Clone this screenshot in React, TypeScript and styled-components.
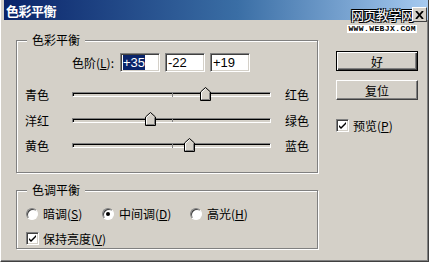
import React from 'react';
import styled, { createGlobalStyle } from 'styled-components';

const face = '#D4D0C8';
const shadow = '#808080';
const darkShadow = '#404040';

const GlobalStyle = createGlobalStyle`
  html, body {
    margin: 0;
    padding: 0;
    background: ${face};
  }
  body {
    font-family: 'Noto Sans CJK SC', 'Liberation Sans', sans-serif;
    font-size: 12px;
    color: #000;
  }
`;

const Window = styled.div`
  position: relative;
  width: 429px;
  height: 262px;
  box-sizing: border-box;
  background: ${face};
  padding: 0 3px 3px 3px;
  border-left: 1px solid #fff;
  border-right: 1px solid ${darkShadow};
  border-bottom: 1px solid ${darkShadow};
  box-shadow: inset -1px -1px 0 ${shadow};
  display: flex;
  flex-direction: column;
  overflow: hidden;
`;

const TitleBar = styled.div`
  height: 20px;
  margin-right: -3px;
  background: linear-gradient(to right, #0a246a 0%, #3a6ea5 55%, #a6caf0 100%);
  display: flex;
  align-items: center;
  padding-left: 2px;
`;

const TitleText = styled.span`
  color: #fff;
  font-weight: bold;
  font-size: 13px;
  letter-spacing: -0.5px;
`;

const Watermark = styled.div`
  position: absolute;
  top: 8px;
  right: 11px;
  display: flex;
  flex-direction: column;
  align-items: center;
`;

const WatermarkCn = styled.span`
  color: #fff;
  font-size: 13px;
  line-height: 14px;
  letter-spacing: -0.5px;
  text-shadow: 1px 1px 0 #000, -1px -1px 0 #000, 1px -1px 0 #000, -1px 1px 0 #000;
`;

const WatermarkUrl = styled.span`
  font-family: 'Liberation Mono', monospace;
  font-weight: bold;
  font-size: 8px;
  line-height: 8px;
  letter-spacing: 0.4px;
  background: #fff;
  color: #000;
  padding: 0 1px;
  margin-top: 3px;
`;

const CloseBox = styled.div`
  position: absolute;
  top: 7px;
  right: 1px;
  width: 13px;
  height: 13px;
  background: ${face};
  border: 1px solid #fff;
  border-right-color: ${darkShadow};
  border-bottom-color: ${darkShadow};
  display: flex;
  align-items: center;
  justify-content: center;
`;

const Body = styled.div`
  flex: 1;
  display: flex;
  padding: 20px 0 0 12px;
  gap: 18px;
`;

const LeftColumn = styled.div`
  width: 302px;
  display: flex;
  flex-direction: column;
  gap: 17px;
`;

const Group = styled.div<{ $h: number }>`
  position: relative;
  height: ${(p) => p.$h}px;
  box-sizing: border-box;
  border: 1px solid ${shadow};
  box-shadow: inset 1px 1px 0 #fff, 1px 1px 0 #fff;
`;

const Legend = styled.span`
  position: absolute;
  top: -8px;
  left: 10px;
  padding: 0 5px;
  background: ${face};
  line-height: 14px;
`;

const GroupInner = styled.div`
  padding: 12px 0 0 8px;
  display: flex;
  flex-direction: column;
`;

const LevelRow = styled.div`
  display: flex;
  align-items: center;
  height: 19px;
  gap: 5px;
`;

const LevelLabel = styled.span`
  width: 89px;
  text-align: right;
  padding-right: 1px;
`;

const NumBox = styled.div`
  width: 40px;
  height: 19px;
  box-sizing: border-box;
  background: #fff;
  border: 1px solid ${shadow};
  border-right-color: #fff;
  border-bottom-color: #fff;
  box-shadow: inset 1px 1px 0 ${darkShadow}, inset -1px -1px 0 ${face};
  padding: 1px 0 0 2px;
  font-family: 'Liberation Sans', sans-serif;
  font-size: 13px;
  line-height: 15px;
`;

const Selected = styled.span`
  background: #0a246a;
  color: #fff;
`;

const SliderRows = styled.div`
  margin-top: 10px;
  display: flex;
  flex-direction: column;
`;

const SliderRow = styled.div`
  display: grid;
  grid-template-columns: 47px 199px auto;
  align-items: center;
  height: 25.5px;
`;

const RightLabel = styled.span`
  margin-left: 14px;
  white-space: nowrap;
`;

const TrackWrap = styled.div`
  position: relative;
  height: 16px;
  display: flex;
  align-items: center;
`;

const Track = styled.div`
  width: 100%;
  height: 5px;
  box-sizing: border-box;
  border: 1px solid ${shadow};
  border-right-color: #fff;
  border-bottom-color: #fff;
  box-shadow: inset 1px 1px 0 #000;
  background: ${face};
`;

const Tick = styled.div`
  position: absolute;
  left: 100px;
  top: 6px;
  width: 1px;
  height: 4px;
  background: ${shadow};
`;

const Thumb = styled.svg`
  position: absolute;
  top: 0;
`;

const ToneInner = styled.div`
  padding: 14px 0 0 9px;
  display: flex;
  flex-direction: column;
  gap: 8px;
`;

const RadioRow = styled.div`
  display: flex;
  align-items: center;
`;

const RadioItem = styled.label<{ $w: number }>`
  display: flex;
  align-items: center;
  gap: 5px;
  width: ${(p) => p.$w}px;
`;

const Radio = styled.span<{ $on?: boolean }>`
  position: relative;
  width: 12px;
  height: 12px;
  box-sizing: border-box;
  border-radius: 50%;
  background: #fff;
  border: 1px solid ${shadow};
  border-right-color: #fff;
  border-bottom-color: #fff;
  box-shadow: inset 1px 1px 0 ${darkShadow};
  &::after {
    content: '';
    display: ${(p) => (p.$on ? 'block' : 'none')};
    position: absolute;
    left: 3px;
    top: 3px;
    width: 4px;
    height: 4px;
    border-radius: 50%;
    background: #000;
  }
`;

const CheckItem = styled.label`
  display: flex;
  align-items: center;
  gap: 4px;
`;

const CheckBox = styled.span`
  width: 13px;
  height: 13px;
  box-sizing: border-box;
  background: #fff;
  border: 1px solid ${shadow};
  border-right-color: #fff;
  border-bottom-color: #fff;
  box-shadow: inset 1px 1px 0 ${darkShadow}, inset -1px -1px 0 ${face};
  display: flex;
  align-items: center;
  justify-content: center;
`;

const RightColumn = styled.div`
  width: 82px;
  display: flex;
  flex-direction: column;
  padding-top: 11px;
`;

const Button = styled.div<{ $default?: boolean }>`
  height: 20px;
  box-sizing: border-box;
  background: ${face};
  border: 1px solid ${(p) => (p.$default ? '#000' : '#fff')};
  ${(p) =>
    p.$default
      ? `box-shadow: inset 1px 1px 0 #fff, inset -1px -1px 0 ${darkShadow}, inset -2px -2px 0 ${shadow};`
      : `border-right-color: ${darkShadow}; border-bottom-color: ${darkShadow}; box-shadow: inset -1px -1px 0 ${shadow};`}
  display: flex;
  align-items: center;
  justify-content: center;
  margin-bottom: 9px;
`;

const PreviewRow = styled.div`
  margin-top: 8px;
`;

const sliders = [
  { left: '青色', right: '红色', value: 35 },
  { left: '洋红', right: '绿色', value: -22 },
  { left: '黄色', right: '蓝色', value: 19 },
];

function SliderThumb({ value }: { value: number }) {
  const center = 99.5 + (value / 100) * 96;
  return (
    <Thumb width="11" height="14" viewBox="0 0 11 14" style={{ left: center - 5.5 }}>
      <polygon points="0.5,13.5 0.5,5 5.5,0.5 10.5,5 10.5,13.5" fill={face} stroke="#000" />
      <polyline points="1.5,12.5 1.5,5.4 5.5,1.8" fill="none" stroke="#fff" />
      <polyline points="9.5,5.4 9.5,12.5 1.5,12.5" fill="none" stroke={shadow} />
    </Thumb>
  );
}

function Check() {
  return (
    <svg width="9" height="9" viewBox="0 0 9 9">
      <path d="M1 4 L3 6 L8 1 L8 3 L3 8 L1 6 Z" fill="#000" />
    </svg>
  );
}

export default function App() {
  return (
    <>
      <GlobalStyle />
      <Window>
        <TitleBar>
          <TitleText>色彩平衡</TitleText>
        </TitleBar>
        <Watermark>
          <WatermarkCn>网页教学网</WatermarkCn>
          <WatermarkUrl>WWW.WEBJX.COM</WatermarkUrl>
        </Watermark>
        <CloseBox>
          <svg width="9" height="8" viewBox="0 0 9 8">
            <path d="M1 0 L8 8 M8 0 L1 8" stroke="#000" strokeWidth="1.8" />
          </svg>
        </CloseBox>
        <Body>
          <LeftColumn>
            <Group $h={133}>
              <Legend>色彩平衡</Legend>
              <GroupInner>
                <LevelRow>
                  <LevelLabel>
                    色阶(<u>L</u>):
                  </LevelLabel>
                  <NumBox>
                    <Selected>+35</Selected>
                  </NumBox>
                  <NumBox>-22</NumBox>
                  <NumBox>+19</NumBox>
                </LevelRow>
                <SliderRows>
                  {sliders.map((s) => (
                    <SliderRow key={s.left}>
                      <span>{s.left}</span>
                      <TrackWrap>
                        <Track />
                        <Tick />
                        <SliderThumb value={s.value} />
                      </TrackWrap>
                      <RightLabel>{s.right}</RightLabel>
                    </SliderRow>
                  ))}
                </SliderRows>
              </GroupInner>
            </Group>
            <Group $h={59}>
              <Legend>色调平衡</Legend>
              <ToneInner>
                <RadioRow>
                  <RadioItem $w={76}>
                    <Radio />
                    <span>
                      暗调(<u>S</u>)
                    </span>
                  </RadioItem>
                  <RadioItem $w={88}>
                    <Radio $on />
                    <span>
                      中间调(<u>D</u>)
                    </span>
                  </RadioItem>
                  <RadioItem $w={80}>
                    <Radio />
                    <span>
                      高光(<u>H</u>)
                    </span>
                  </RadioItem>
                </RadioRow>
                <CheckItem>
                  <CheckBox>
                    <Check />
                  </CheckBox>
                  <span>
                    保持亮度(<u>V</u>)
                  </span>
                </CheckItem>
              </ToneInner>
            </Group>
          </LeftColumn>
          <RightColumn>
            <Button $default>好</Button>
            <Button>复位</Button>
            <PreviewRow>
              <CheckItem>
                <CheckBox>
                  <Check />
                </CheckBox>
                <span>
                  预览(<u>P</u>)
                </span>
              </CheckItem>
            </PreviewRow>
          </RightColumn>
        </Body>
      </Window>
    </>
  );
}
